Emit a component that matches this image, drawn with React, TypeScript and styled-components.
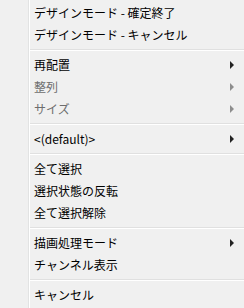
import React from 'react';
import styled, { createGlobalStyle } from 'styled-components';

const GlobalStyle = createGlobalStyle`
  html, body {
    margin: 0;
    padding: 0;
    background: #f0f0f0;
  }
`;

const Menu = styled.div`
  width: 244px;
  height: 308px;
  box-sizing: border-box;
  padding: 2px 0;
  display: flex;
  flex-direction: column;
  background:
    linear-gradient(to right, transparent 28px, #e2e3e3 28px, #e2e3e3 29px, #ffffff 29px, #ffffff 30px, transparent 30px),
    #f0f0f0;
  font-family: "Noto Sans CJK JP", "Noto Sans", sans-serif;
  font-size: 12px;
  color: #000;
`;

const Item = styled.div<{ disabled?: boolean }>`
  height: 22px;
  display: flex;
  align-items: center;
  justify-content: space-between;
  padding: 0 10px 0 34px;
  color: ${p => (p.disabled ? '#6d6d6d' : '#000000')};
  white-space: nowrap;
  line-height: 22px;
`;

const Label = styled.span`
  display: block;
  margin-top: -1px;
`;

const Arrow = styled.span<{ disabled?: boolean }>`
  width: 0;
  height: 0;
  border-top: 4px solid transparent;
  border-bottom: 4px solid transparent;
  border-left: 4px solid ${p => (p.disabled ? '#8d8d8d' : '#222222')};
`;

const Separator = styled.div`
  height: 8px;
  display: flex;
  align-items: center;
  padding-left: 30px;

  &::after {
    content: '';
    flex: 1;
    height: 1px;
    border-bottom: 1px solid #ffffff;
    background: #e0e0e0;
  }
`;

type Entry =
  | { kind: 'item'; label: string; sub?: boolean; disabled?: boolean }
  | { kind: 'sep' };

const entries: Entry[] = [
  { kind: 'item', label: 'デザインモード - 確定終了' },
  { kind: 'item', label: 'デザインモード - キャンセル' },
  { kind: 'sep' },
  { kind: 'item', label: '再配置', sub: true },
  { kind: 'item', label: '整列', sub: true, disabled: true },
  { kind: 'item', label: 'サイズ', sub: true, disabled: true },
  { kind: 'sep' },
  { kind: 'item', label: '<(default)>', sub: true },
  { kind: 'sep' },
  { kind: 'item', label: '全て選択' },
  { kind: 'item', label: '選択状態の反転' },
  { kind: 'item', label: '全て選択解除' },
  { kind: 'sep' },
  { kind: 'item', label: '描画処理モード', sub: true },
  { kind: 'item', label: 'チャンネル表示' },
  { kind: 'sep' },
  { kind: 'item', label: 'キャンセル' },
];

const App: React.FC = () => {
  return (
    <>
      <GlobalStyle />
      <Menu>
        {entries.map((e, i) =>
          e.kind === 'sep' ? (
            <Separator key={i} />
          ) : (
            <Item key={i} disabled={e.disabled}>
              <Label>{e.label}</Label>
              {e.sub && <Arrow disabled={e.disabled} />}
            </Item>
          )
        )}
      </Menu>
    </>
  );
};

export default App;
